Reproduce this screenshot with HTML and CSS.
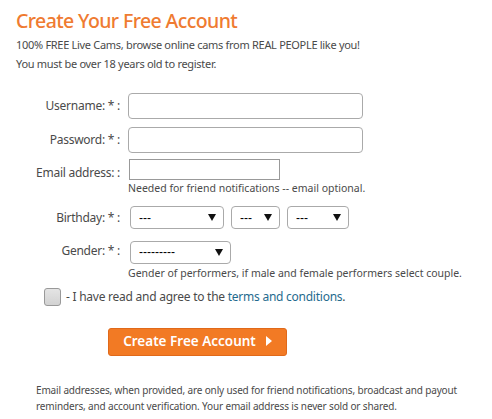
FILE: index.html
```html
<!DOCTYPE html>
<html>
<head>
<meta charset="utf-8">
<link rel="stylesheet" href="styles.css">
</head>
<body>
<div class="page">
  <h1 class="title">Create Your Free Account</h1>
  <p class="intro">100% FREE Live Cams, browse online cams from REAL PEOPLE like you!</p>
  <p class="intro">You must be over 18 years old to register.</p>

  <form class="form">
    <div class="row row-user">
      <label class="label">Username: * :</label>
      <div class="field"><input class="text" type="text"></div>
    </div>
    <div class="row row-pass">
      <label class="label">Password: * :</label>
      <div class="field"><input class="text" type="password"></div>
    </div>
    <div class="row row-email">
      <label class="label">Email address: :</label>
      <div class="field">
        <input class="email" type="text">
        <div class="hint">Needed for friend notifications -- email optional.</div>
      </div>
    </div>
    <div class="row row-select row-birth">
      <label class="label">Birthday: * :</label>
      <div class="field selects">
        <span class="sel sel-month"><select><option>---</option></select></span>
        <span class="sel sel-day"><select><option>---</option></select></span>
        <span class="sel sel-year"><select><option>---</option></select></span>
      </div>
    </div>
    <div class="row row-select row-gender">
      <label class="label">Gender: * :</label>
      <div class="field">
        <span class="sel sel-gender"><select><option>---------</option></select></span>
        <div class="hint">Gender of performers, if male and female performers select couple.</div>
      </div>
    </div>
    <div class="agree">
      <span class="check"></span>
      <span>- I have read and agree to the <a class="link" href="#">terms and conditions</a>.</span>
    </div>
    <div class="submit-row">
      <button class="submit" type="button">Create Free Account <span class="tri"></span></button>
    </div>
  </form>

  <p class="footnote">Email addresses, when provided, are only used for friend notifications, broadcast and payout reminders, and account verification. Your email address is never sold or shared.</p>
</div>
</body>
</html>
```
FILE: styles.css
```css
html, body {
  margin: 0;
  padding: 0;
  background: #fff;
}
body {
  font-family: "Noto Sans", "Open Sans", sans-serif;
  color: #505050;
}
.page {
  padding: 7px 16px 0 16px;
}
.title {
  margin: 0;
  font-size: 19.5px;
  line-height: 28px;
  font-weight: 500;
  color: #ef7b31;
  letter-spacing: -0.6px;
}
.intro {
  margin: 0;
  font-size: 11px;
  line-height: 19px;
  letter-spacing: -0.3px;
  color: #4a4a4a;
}
.form {
  margin-top: 20px;
}
.row {
  display: grid;
  grid-template-columns: 104px 1fr;
  column-gap: 8px;
  align-items: start;
}
.row-user { margin-bottom: 8px; }
.row-pass { margin-bottom: 6px; }
.row-email { margin-bottom: 10px; }
.row-birth { margin-bottom: 10px; }
.label {
  text-align: right;
  font-size: 12px;
  letter-spacing: -0.25px;
  line-height: 26px;
  color: #4a4a4a;
  white-space: nowrap;
}
.text {
  box-sizing: border-box;
  width: 235px;
  height: 26px;
  border: 1px solid #aaa;
  border-radius: 4px;
  margin: 0;
  padding: 0 6px;
  display: block;
}
.row-email .label {
  line-height: 21px;
  padding-top: 3px;
}
.email {
  box-sizing: border-box;
  width: 151px;
  height: 21px;
  border: 1px solid #999;
  border-radius: 0;
  margin: 0 0 0 1px;
  display: block;
}
.hint {
  font-size: 10.5px;
  line-height: 16px;
  color: #4a4a4a;
}
.row-select .label {
  line-height: 23px;
}
.selects {
  display: flex;
  gap: 7px;
  padding-left: 2px;
}
.sel {
  position: relative;
  display: inline-block;
}
.row-gender .sel {
  margin-left: 2px;
}
.sel select {
  appearance: none;
  -webkit-appearance: none;
  box-sizing: border-box;
  height: 23px;
  border: 1px solid #aaa;
  border-radius: 4px;
  background: #fff;
  font-family: "Liberation Sans", sans-serif;
  font-size: 12px;
  color: #000;
  padding: 0 0 0 8px;
  margin: 0;
  display: block;
}
.sel::after {
  content: "";
  position: absolute;
  right: 8px;
  top: 8px;
  border-left: 4px solid transparent;
  border-right: 4px solid transparent;
  border-top: 7px solid #111;
}
.sel-month select { width: 94px; }
.sel-day select { width: 49px; }
.sel-year select { width: 62px; }
.sel-gender select { width: 101px; }
.row-gender .hint {
  margin-top: 1px;
}
.agree {
  display: flex;
  align-items: center;
  gap: 5px;
  margin-top: 7px;
  padding-left: 28px;
  font-size: 12px;
  letter-spacing: -0.25px;
  line-height: 18px;
  color: #4a4a4a;
}
.check {
  box-sizing: border-box;
  width: 17px;
  height: 18px;
  border: 1px solid #999;
  border-radius: 3px;
  background: linear-gradient(#e4e4e4, #d2d2d2);
  flex: none;
}
.link {
  color: #1f6b8e;
  text-decoration: none;
}
.submit-row {
  padding-left: 92px;
  margin-top: 22px;
}
.submit {
  box-sizing: border-box;
  width: 179px;
  height: 28px;
  border: 1px solid #e0691a;
  border-radius: 3px;
  background: #f27a24;
  color: #fff;
  font-family: "Noto Sans", "Open Sans", sans-serif;
  font-size: 13.5px;
  font-weight: 600;
  display: flex;
  align-items: center;
  justify-content: center;
  gap: 10px;
  padding: 0 0 1px 0;
}
.tri {
  width: 0;
  height: 0;
  border-top: 5px solid transparent;
  border-bottom: 5px solid transparent;
  border-left: 6px solid #fff;
}
.footnote {
  margin: 26px 0 0 20px;
  font-size: 10px;
  letter-spacing: -0.15px;
  line-height: 16px;
  color: #4a4a4a;
}
```
